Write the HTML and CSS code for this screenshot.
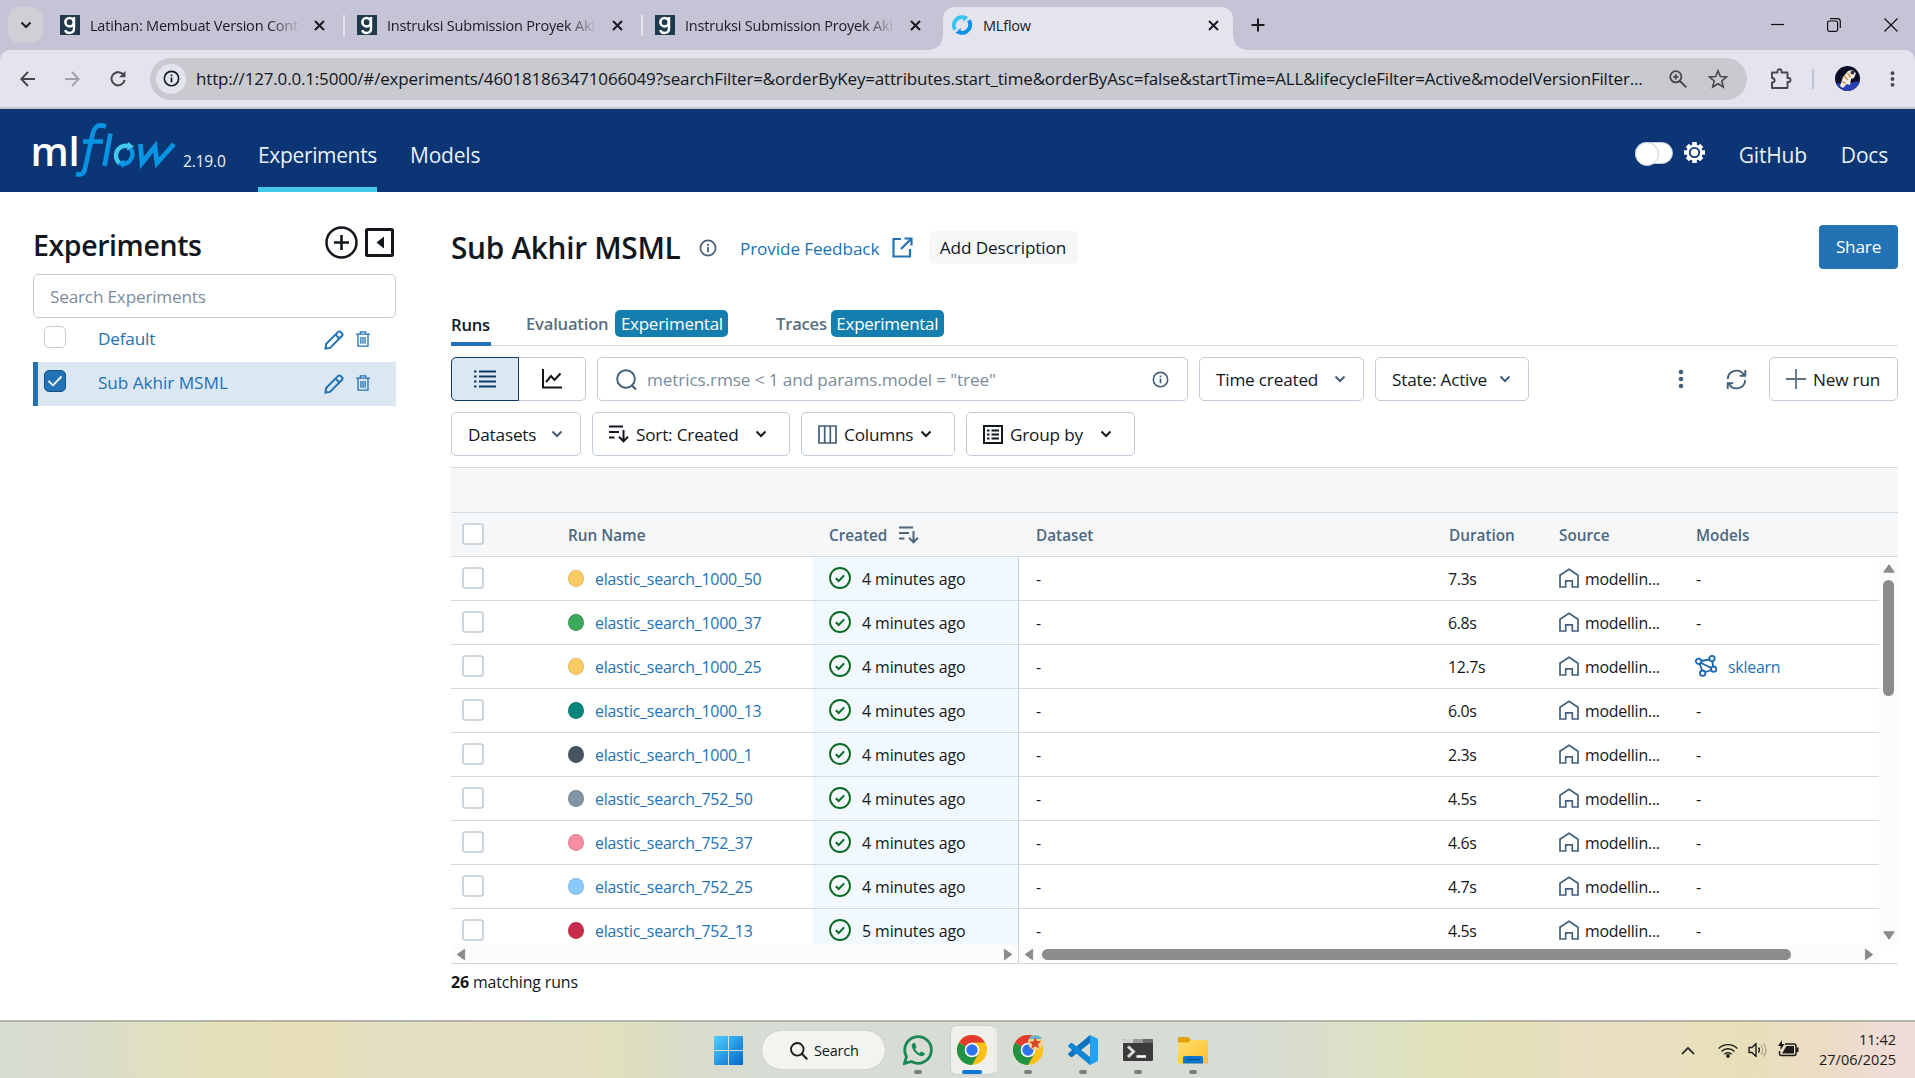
FILE: index.html
```html
<!DOCTYPE html>
<html lang="en">
<head>
<meta charset="utf-8">
<title>MLflow</title>
<link rel="stylesheet" href="styles.css">
</head>
<body>
<svg class="sprite" aria-hidden="true">
  <defs>
    <linearGradient id="win" x1="0" y1="0" x2="1" y2="1"><stop offset="0" stop-color="#4fd0ff"/><stop offset="1" stop-color="#0067c8"/></linearGradient>
    <linearGradient id="fold" x1="0" y1="0" x2="1" y2="1"><stop offset="0" stop-color="#ffdf70"/><stop offset="1" stop-color="#fcc02a"/></linearGradient>
  </defs>
  <symbol id="i-glints" viewBox="0 0 20 20"><rect width="20" height="20" fill="#1f3a4d"/><circle cx="9.6" cy="7.2" r="4.2" fill="none" stroke="#fff" stroke-width="2.6"/><path d="M14 2v11.5c0 5.6-7.6 5.6-8.8 1.6" fill="none" stroke="#fff" stroke-width="2.4"/></symbol>
  <symbol id="i-x" viewBox="0 0 11 11"><path d="M1 1l9 9M10 1l-9 9" fill="none" stroke="#1a1a1f" stroke-width="2"/></symbol>
  <symbol id="i-ring" viewBox="0 0 20 20"><path d="M3.200 14.600A8 8 0 0 1 12 2.500" fill="none" stroke="#38c6f0" stroke-width="3.800"/><path d="M16.800 5.400A8 8 0 0 1 8 17.500" fill="none" stroke="#0a90e6" stroke-width="3.800"/><path d="M10.500 0l6 2-5 5z" fill="#38c6f0"/><path d="M9.500 20l-6-2 5-5z" fill="#0a90e6"/></symbol>
  <symbol id="i-down" viewBox="0 0 12 8"><path d="M1.500 1.500L6 6l4.500-4.500" fill="none" stroke="currentColor" stroke-width="2"/></symbol>
  <symbol id="i-box" viewBox="0 0 22 22"><rect x="1" y="1" width="20" height="20" rx="2.500" fill="#fff" stroke="#c0cdd8" stroke-width="1.700"/></symbol>
  <symbol id="i-ok" viewBox="0 0 22 22"><circle cx="11" cy="11" r="10" fill="none" stroke="#0b6b20" stroke-width="1.900"/><path d="M6.800 11.300l2.900 2.700 5.400-5.600" fill="none" stroke="#0b6b20" stroke-width="2"/></symbol>
  <symbol id="i-home" viewBox="0 0 20 20"><path d="M1 7.200L10 1.200l9 6V19h-5.700v-6.200H6.700V19H1z" fill="none" stroke="#445f78" stroke-width="1.700"/></symbol>
  <symbol id="i-info" viewBox="0 0 18 18"><circle cx="9" cy="9" r="7.600" fill="none" stroke="currentColor" stroke-width="1.700"/><path d="M9 8v5M9 4.800v1.900" stroke="currentColor" stroke-width="1.800"/></symbol>
  <symbol id="i-pencil" viewBox="0 0 20 20"><path d="M1.500 18.500l.600-4.500L14.200 1.900a1.600 1.600 0 0 1 2.300 0l1.600 1.600a1.600 1.600 0 0 1 0 2.300L6 17.900zM11.500 4.600l3.900 3.900" fill="none" stroke="#2272b4" stroke-width="2"/></symbol>
  <symbol id="i-trash" viewBox="0 0 14 16"><path d="M0 3.200h14M2 3.500v11.700h10V3.500M4.300 3V.8h5.400V3M4.900 6v6.700M7 6v6.700M9.100 6v6.700" fill="none" stroke="#2272b4" stroke-width="1.300"/></symbol>
  <symbol id="i-sort" viewBox="0 0 20 18"><path d="M0 1.500h14M0 7h10M0 12.500h5.500M14.500 5v11M10 11.800l4.500 4.500 4.500-4.500" fill="none" stroke="currentColor" stroke-width="2"/></symbol>
  <symbol id="i-dots" viewBox="0 0 6 20"><circle cx="3" cy="3" r="2.300" fill="currentColor"/><circle cx="3" cy="10" r="2.300" fill="currentColor"/><circle cx="3" cy="17" r="2.300" fill="currentColor"/></symbol>
  <symbol id="i-chrome" viewBox="0 0 30 30"><circle cx="15" cy="15" r="15" fill="#fbc116"/><path d="M15 15L2 7.500A15 15 0 0 0 15 30l6.500-11.200z" fill="#229342"/><path d="M15 15L2 7.500a15 15 0 0 1 26 0z" fill="#e33b2e"/><path d="M15 7.500h13L15 15z" fill="#e33b2e"/><path d="M15 7.500h13a15 15 0 0 1 2 7.500L21 18z" fill="#fbc116"/><circle cx="15" cy="15" r="7.300" fill="#fff"/><circle cx="15" cy="15" r="5.700" fill="#2f74ec"/></symbol>
  <symbol id="i-tri" viewBox="0 0 12 9"><path d="M6 .8L11.300 8.200H.7z" fill="#8b8b8b" stroke="#8b8b8b" stroke-linejoin="round"/></symbol>
</svg>

<div class="tabstrip">
  <div class="tab-search"><svg width="12" height="8"><use href="#i-down"/></svg></div>
  <div class="tab first"><svg width="20" height="20"><use href="#i-glints"/></svg><span class="tab-title fade">Latihan: Membuat Version Cont</span><svg width="11" height="11"><use href="#i-x"/></svg></div>
  <div class="tab-sep"></div>
  <div class="tab"><svg width="20" height="20"><use href="#i-glints"/></svg><span class="tab-title fade">Instruksi Submission Proyek Akl</span><svg width="11" height="11"><use href="#i-x"/></svg></div>
  <div class="tab-sep"></div>
  <div class="tab"><svg width="20" height="20"><use href="#i-glints"/></svg><span class="tab-title fade">Instruksi Submission Proyek Akl</span><svg width="11" height="11"><use href="#i-x"/></svg></div>
  <div class="tab active"><svg width="20" height="20"><use href="#i-ring"/></svg><span class="tab-title">MLflow</span><svg width="11" height="11"><use href="#i-x"/></svg></div>
  <svg class="new-tab" width="14" height="14" viewBox="0 0 14 14"><path d="M7 .5v13M.5 7h13" stroke="#1a1a1f" stroke-width="2"/></svg>
  <div class="window-buttons">
    <svg width="13" height="14" viewBox="0 0 13 14"><path d="M0 6.500h13" stroke="#111" stroke-width="1.200"/></svg>
    <svg width="14" height="14" viewBox="0 0 14 14"><rect x=".6" y="3" width="10" height="10.300" rx="1.500" fill="none" stroke="#111" stroke-width="1.200"/><path d="M3 .7h7.500a2.800 2.800 0 0 1 2.800 2.800V10" fill="none" stroke="#111" stroke-width="1.200"/></svg>
    <svg width="14" height="14" viewBox="0 0 14 14"><path d="M.5 .5l13 13M13.500 .5l-13 13" stroke="#111" stroke-width="1.200"/></svg>
  </div>
</div>

<div class="toolbar-back">
<div class="toolbar">
  <svg class="nav-icon" width="15" height="16" viewBox="0 0 15 16"><path d="M15 8H1.500M8 1L1.300 8 8 15" fill="none" stroke="#46474c" stroke-width="1.900"/></svg>
  <svg class="nav-icon" width="15" height="16" viewBox="0 0 15 16"><path d="M0 8h13.500M7 1l6.700 7L7 15" fill="none" stroke="#a2a2a9" stroke-width="1.900"/></svg>
  <svg class="nav-icon" width="16" height="17" viewBox="0 0 16 17"><path d="M13.700 5.200A6.600 6.600 0 1 0 14.600 10" fill="none" stroke="#46474c" stroke-width="2"/><path d="M15.500 .8v6.400H9.200z" fill="#46474c"/></svg>
  <div class="address">
    <div class="site-info"><svg width="17" height="17"><use href="#i-info"/></svg></div>
    <span class="url">http://127.0.0.1:5000/#/experiments/460181863471066049?searchFilter=&amp;orderByKey=attributes.start_time&amp;orderByAsc=false&amp;startTime=ALL&amp;lifecycleFilter=Active&amp;modelVersionFilter...</span>
    <svg width="18" height="18" viewBox="0 0 18 18"><circle cx="6.800" cy="6.800" r="5.600" fill="none" stroke="#46474c" stroke-width="1.800"/><path d="M11 11l6.300 6.300M4.200 6.800h5.200M6.800 4.200v5.200" stroke="#46474c" stroke-width="1.800"/></svg>
    <svg class="star" width="20" height="20" viewBox="0 0 20 20"><path d="M10 1.800l2.400 5.700 6.100.5-4.700 4 1.500 6L10 14.800 4.700 18l1.500-6-4.700-4 6.100-.5z" fill="none" stroke="#46474c" stroke-width="1.600"/></svg>
  </div>
  <svg class="puzzle" width="22" height="22" viewBox="0 0 22 22"><path d="M2 4.500h5.500V3.200a2 2 0 0 1 4 0v1.300H17.500V10h1a1.800 1.800 0 0 1 0 4h-1v6H2v-5.500c3.500-.300 3.500-4.200 0-4.500z" fill="none" stroke="#46474c" stroke-width="1.900" stroke-linejoin="round"/></svg>
  <div class="bar-sep"></div>
  <svg class="avatar" width="25" height="25" viewBox="0 0 25 25"><clipPath id="av"><circle cx="12.500" cy="12.500" r="12.500"/></clipPath><g clip-path="url(#av)"><rect width="25" height="25" fill="#0b0d24"/><path d="M0 17q12 1 25-2v10H0z" fill="#2a3fb4"/><path d="M5 20l3-9 5-6 4-1 4 3-2 5-3 1-1 6-3-1-4 4z" fill="#f1ece4"/><path d="M9 10l4 4M12.500 7l3 4M7 16l4 1" stroke="#d9924e" stroke-width="1.500"/><circle cx="17.500" cy="6.500" r="2" fill="#393548"/></g></svg>
  <svg class="menu" width="5" height="18"><use href="#i-dots"/></svg>
</div>
</div>

<header class="app-header">
  <svg class="logo" width="146" height="60" viewBox="0 0 146 60">
    <text x="-2.500" y="46" class="logo-ml" textLength="49" lengthAdjust="spacingAndGlyphs">ml</text>
    <path d="M73 6.500c-8-3-11.500 0-13.500 8l-7.500 34c-1 5-3 7-9 5.500M50 21.500h20" fill="none" stroke="#0794e3" stroke-width="4.600"/>
    <path d="M77.500 13.500L71.500 46" stroke="#0794e3" stroke-width="4.600"/>
    <path d="M87 43.500a9.800 9.800 0 0 1 8-17.500" fill="none" stroke="#43c9ed" stroke-width="4.500"/>
    <path d="M97.500 28.500a9.800 9.800 0 0 1-8.500 15.500" fill="none" stroke="#0794e3" stroke-width="4.500"/>
    <path d="M95 22l6 4.500-7 4z" fill="#43c9ed"/><path d="M90.500 48l-6-4.500 7-4z" fill="#0794e3"/>
    <path d="M107.500 24l1.500 19 13-16.500 2 16.500L141 24" fill="none" stroke="#0794e3" stroke-width="4.800"/>
  </svg>
  <span class="version">2.19.0</span>
  <nav class="main-nav"><a class="current">Experiments</a><a>Models</a></nav>
  <div class="header-right">
    <div class="toggle"></div>
    <svg class="gear" width="23" height="23" viewBox="0 0 23 23"><circle cx="11.500" cy="11.500" r="8" fill="#fff"/><path d="M11.500 1v21M1 11.500h21M4.300 4.300l14.400 14.400M18.700 4.300L4.300 18.700" stroke="#fff" stroke-width="4.600"/><circle cx="11.500" cy="11.500" r="4.700" fill="#fff" stroke="#0b3574" stroke-width="1.800"/></svg>
    <a>GitHub</a><a>Docs</a>
  </div>
</header>

<div class="page">
  <aside class="sidebar">
    <div class="side-head">
      <h2>Experiments</h2>
      <svg width="33" height="33" viewBox="0 0 33 33"><circle cx="16.500" cy="16.500" r="15" fill="none" stroke="#11171c" stroke-width="2.500"/><path d="M16.500 9v15M9 16.500h15" stroke="#11171c" stroke-width="2.600"/></svg>
      <svg class="collapse" width="29" height="29" viewBox="0 0 29 29"><rect x="1.500" y="1.500" width="26" height="26" rx="1" fill="none" stroke="#11171c" stroke-width="3"/><path d="M19 8.500v12l-7.500-6z" fill="#11171c"/></svg>
    </div>
    <div class="side-search">Search Experiments</div>
    <div class="exp"><i class="check"></i><span>Default</span><svg width="20" height="20"><use href="#i-pencil"/></svg><svg class="trash" width="14" height="16"><use href="#i-trash"/></svg></div>
    <div class="exp selected"><i class="check on"><svg width="16" height="12" viewBox="0 0 16 12"><path d="M1.500 6l4.500 4.300L14.500 1.500" fill="none" stroke="#fff" stroke-width="1.800"/></svg></i><span>Sub Akhir MSML</span><svg width="20" height="20"><use href="#i-pencil"/></svg><svg class="trash" width="14" height="16"><use href="#i-trash"/></svg></div>
  </aside>

  <main class="content">
    <div class="title-row">
      <h1>Sub Akhir MSML</h1>
      <svg class="slate title-info" width="18" height="18"><use href="#i-info"/></svg>
      <a class="feedback">Provide Feedback</a>
      <svg width="21" height="21" viewBox="0 0 21 21"><path d="M9 2H1.500v17.500H18V12M12.500 1.500h7v7M19.500 1.500L9 12" fill="none" stroke="#2272b4" stroke-width="2.200"/></svg>
      <button class="desc">Add Description</button>
      <button class="share">Share</button>
    </div>
    <div class="tabs">
      <div class="view-tab on">Runs</div>
      <div class="view-tab eval">Evaluation<span class="badge">Experimental</span></div>
      <div class="view-tab traces">Traces<span class="badge">Experimental</span></div>
    </div>
    <div class="controls">
      <div class="segment"><div class="seg on"><svg width="22" height="18" viewBox="0 0 22 18"><path d="M0 1.500h2.500M5 1.500h17M0 6.500h2.500M5 6.500h17M0 11.500h2.500M5 11.500h17M0 16.500h2.500M5 16.500h17" stroke="#0e3a66" stroke-width="2"/></svg></div><div class="seg"><svg width="20" height="20" viewBox="0 0 20 20"><path d="M1 0v18.500h19M4 13l5-6 3.500 4L18.500 4.500" fill="none" stroke="#11171c" stroke-width="2"/></svg></div></div>
      <div class="filter"><svg width="21" height="21" viewBox="0 0 21 21"><circle cx="10" cy="10" r="8.800" fill="none" stroke="#445f78" stroke-width="1.900"/><path d="M15.500 16l4.500 4.500" stroke="#445f78" stroke-width="2.200"/></svg><span>metrics.rmse &lt; 1 and params.model = "tree"</span><svg class="slate" width="17" height="17"><use href="#i-info"/></svg></div>
      <button class="btn time">Time created<svg class="slate" width="12" height="8"><use href="#i-down"/></svg></button>
      <button class="btn state">State: Active<svg class="slate" width="12" height="8"><use href="#i-down"/></svg></button>
      <svg class="slate more" width="6" height="20"><use href="#i-dots"/></svg>
      <svg class="refresh" width="21" height="21" viewBox="0 0 21 21"><path d="M1.800 10A8.700 8.700 0 0 1 18 6M19.200 11A8.700 8.700 0 0 1 3 15M19.300 1v5.700h-5.500M1.700 20v-5.700h5.500" fill="none" stroke="#445f78" stroke-width="1.900"/></svg>
      <button class="btn new-run"><svg width="20" height="20" viewBox="0 0 20 20"><path d="M10 0v20M0 10h20" stroke="#5f7281" stroke-width="1.800"/></svg>New run</button>
    </div>
    <div class="controls second">
      <button class="btn datasets">Datasets<svg class="slate" width="12" height="8"><use href="#i-down"/></svg></button>
      <button class="btn sort"><svg width="20" height="18"><use href="#i-sort"/></svg>Sort: Created<svg width="12" height="8"><use href="#i-down"/></svg></button>
      <button class="btn columns"><svg width="19" height="19" viewBox="0 0 19 19"><path d="M1 1h17v17H1zM6.700 1v17M12.300 1v17" fill="none" stroke="#445f78" stroke-width="1.700"/></svg>Columns<svg width="12" height="8"><use href="#i-down"/></svg></button>
      <button class="btn group"><svg width="20" height="19" viewBox="0 0 20 19"><rect x="1" y="1" width="18" height="17" fill="none" stroke="#11171c" stroke-width="2"/><path d="M4 5.500h2.500M8.500 5.500h7.500M4 9.500h2.500M8.500 9.500h7.500M4 13.500h2.500M8.500 13.500h7.500" stroke="#11171c" stroke-width="1.800"/></svg>Group by<svg width="12" height="8"><use href="#i-down"/></svg></button>
    </div>

    <section class="grid">
      <div class="group-head"></div>
      <div class="head-row"><svg width="22" height="22"><use href="#i-box"/></svg><span>Run Name</span><span class="h-created">Created<svg width="20" height="18"><use href="#i-sort"/></svg></span><span>Dataset</span><span>Duration</span><span>Source</span><span>Models</span></div>
      <div class="grid-body">
        <div class="pinned">
          <div class="pin-rows">
            <div class="pr"><svg width="22" height="22"><use href="#i-box"/></svg><a><i class="dot c1"></i>elastic_search_1000_50</a><span><svg width="22" height="22"><use href="#i-ok"/></svg>4 minutes ago</span></div>
            <div class="pr"><svg width="22" height="22"><use href="#i-box"/></svg><a><i class="dot c2"></i>elastic_search_1000_37</a><span><svg width="22" height="22"><use href="#i-ok"/></svg>4 minutes ago</span></div>
            <div class="pr"><svg width="22" height="22"><use href="#i-box"/></svg><a><i class="dot c1"></i>elastic_search_1000_25</a><span><svg width="22" height="22"><use href="#i-ok"/></svg>4 minutes ago</span></div>
            <div class="pr"><svg width="22" height="22"><use href="#i-box"/></svg><a><i class="dot c3"></i>elastic_search_1000_13</a><span><svg width="22" height="22"><use href="#i-ok"/></svg>4 minutes ago</span></div>
            <div class="pr"><svg width="22" height="22"><use href="#i-box"/></svg><a><i class="dot c4"></i>elastic_search_1000_1</a><span><svg width="22" height="22"><use href="#i-ok"/></svg>4 minutes ago</span></div>
            <div class="pr"><svg width="22" height="22"><use href="#i-box"/></svg><a><i class="dot c5"></i>elastic_search_752_50</a><span><svg width="22" height="22"><use href="#i-ok"/></svg>4 minutes ago</span></div>
            <div class="pr"><svg width="22" height="22"><use href="#i-box"/></svg><a><i class="dot c6"></i>elastic_search_752_37</a><span><svg width="22" height="22"><use href="#i-ok"/></svg>4 minutes ago</span></div>
            <div class="pr"><svg width="22" height="22"><use href="#i-box"/></svg><a><i class="dot c7"></i>elastic_search_752_25</a><span><svg width="22" height="22"><use href="#i-ok"/></svg>4 minutes ago</span></div>
            <div class="pr"><svg width="22" height="22"><use href="#i-box"/></svg><a><i class="dot c8"></i>elastic_search_752_13</a><span><svg width="22" height="22"><use href="#i-ok"/></svg>5 minutes ago</span></div>
          </div>
          <div class="hbar"><svg class="left" width="12" height="9"><use href="#i-tri"/></svg><svg class="right" width="12" height="9"><use href="#i-tri"/></svg></div>
        </div>
        <div class="scrolling">
          <div class="sc-rows">
            <div class="sr"><span>-</span><span>7.3s</span><span><svg width="20" height="20"><use href="#i-home"/></svg>modellin...</span><span>-</span></div>
            <div class="sr"><span>-</span><span>6.8s</span><span><svg width="20" height="20"><use href="#i-home"/></svg>modellin...</span><span>-</span></div>
            <div class="sr"><span>-</span><span>12.7s</span><span><svg width="20" height="20"><use href="#i-home"/></svg>modellin...</span><a><svg width="22" height="22" viewBox="0 0 22 22"><path d="M3.500 6.500L17 4M4 7l4 11M4 7l14.500 7M17 4l1.500 10M18 14.500L8 18" fill="none" stroke="#1b66ae" stroke-width="1.800"/><g fill="#fff" stroke="#1b66ae" stroke-width="1.800"><circle cx="3.600" cy="6.300" r="2.700"/><circle cx="17" cy="3.600" r="2.700"/><circle cx="18.700" cy="14.200" r="2.700"/><circle cx="7.700" cy="18.200" r="2.700"/></g></svg>sklearn</a></div>
            <div class="sr"><span>-</span><span>6.0s</span><span><svg width="20" height="20"><use href="#i-home"/></svg>modellin...</span><span>-</span></div>
            <div class="sr"><span>-</span><span>2.3s</span><span><svg width="20" height="20"><use href="#i-home"/></svg>modellin...</span><span>-</span></div>
            <div class="sr"><span>-</span><span>4.5s</span><span><svg width="20" height="20"><use href="#i-home"/></svg>modellin...</span><span>-</span></div>
            <div class="sr"><span>-</span><span>4.6s</span><span><svg width="20" height="20"><use href="#i-home"/></svg>modellin...</span><span>-</span></div>
            <div class="sr"><span>-</span><span>4.7s</span><span><svg width="20" height="20"><use href="#i-home"/></svg>modellin...</span><span>-</span></div>
            <div class="sr"><span>-</span><span>4.5s</span><span><svg width="20" height="20"><use href="#i-home"/></svg>modellin...</span><span>-</span></div>
          </div>
          <div class="hbar"><svg class="left" width="12" height="9"><use href="#i-tri"/></svg><i class="hthumb"></i><svg class="right" width="12" height="9"><use href="#i-tri"/></svg></div>
        </div>
        <div class="vbar"><svg width="12" height="9"><use href="#i-tri"/></svg><i class="vthumb"></i><svg class="down" width="12" height="9"><use href="#i-tri"/></svg></div>
      </div>
    </section>
    <p class="count"><b>26</b> matching runs</p>
  </main>
</div>

<footer class="taskbar">
  <div class="apps">
    <svg class="start" width="29" height="29" viewBox="0 0 29 29"><path d="M1 0h13v14H0V1a1 1 0 0 1 1-1zM15 0h13a1 1 0 0 1 1 1v13H15zM0 15h14v14H1a1 1 0 0 1-1-1zM15 15h14v13a1 1 0 0 1-1 1H15z" fill="url(#win)"/></svg>
    <div class="search-pill"><svg width="18" height="18" viewBox="0 0 18 18"><circle cx="7.300" cy="7.300" r="6.300" fill="none" stroke="#1b1b1b" stroke-width="1.800"/><path d="M11.800 11.800l5.500 5.500" stroke="#1b1b1b" stroke-width="2"/></svg>Search</div>
    <div class="app"><svg width="30" height="30" viewBox="0 0 30 30"><path d="M1.500 28.500l2-7a13.300 13.300 0 1 1 5 5z" fill="none" stroke="#1b8755" stroke-width="2.800"/><path d="M10.500 8c-2 1-2.300 3-1 5.500 2 4 4.500 6.300 8 7.500 2 .600 4-.500 4.500-2.500l-3.700-2-1.800 1.700c-2-.800-3.500-2.300-4.300-4.200l1.300-1.700L12 8z" fill="#1b8755"/></svg><i class="pip"></i></div>
    <div class="app active-app"><svg width="30" height="30"><use href="#i-chrome"/></svg><i class="pip wide"></i></div>
    <div class="app"><svg width="30" height="30" viewBox="0 0 30 30"><use href="#i-chrome"/><circle cx="22.500" cy="7.500" r="7.500" fill="#f0d28a"/><path d="M16 4a7.500 7.500 0 0 1 13 0z" fill="#57b8d6"/><path d="M22 2l1.800 4 4.200.300-3.200 3L26 13.500l-3.900-2.200-3.600 2.500.9-4.400-3-2.700 4.200-.500z" fill="#d8432a"/></svg><i class="pip"></i></div>
    <div class="app"><svg width="30" height="30" viewBox="0 0 30 30"><path d="M22 0v8L4.500 21.800a1.500 1.500 0 0 1-2 0L.6 20a1.300 1.300 0 0 1 0-2z" fill="#0f74c0"/><path d="M22 30v-8L4.500 8.200a1.500 1.500 0 0 0-2 0L.6 10a1.300 1.300 0 0 0 0 2z" fill="#1186d4"/><path d="M22 0l6.800 3.200A2 2 0 0 1 30 5v20a2 2 0 0 1-1.200 1.800L22 30z" fill="#25a3f2"/></svg><i class="pip"></i></div>
    <div class="app"><svg width="30" height="30" viewBox="0 0 30 30"><rect y="4" width="30" height="22" rx="1.500" fill="#3b3b3b"/><path d="M0 8V5.500A1.500 1.500 0 0 1 1.500 4H10v4z" fill="#cfcfcf"/><path d="M10 4h10v4H10z" fill="#999"/><path d="M20 4h8.500A1.500 1.500 0 0 1 30 5.500V8H20z" fill="#6a6a6a"/><path d="M5 11.500l5.500 5L5 22" fill="none" stroke="#d8d8d8" stroke-width="3"/><path d="M13.500 21.500h9.500" stroke="#fff" stroke-width="2.600"/></svg><i class="pip"></i></div>
    <div class="app"><svg width="30" height="30" viewBox="0 0 30 30"><path d="M0 3.500A1.500 1.500 0 0 1 1.500 2H10L13 5v5H0z" fill="#e3a008"/><path d="M0 7.500h10l3-2.500h15.500A1.500 1.500 0 0 1 30 6.500V28.500H0z" fill="url(#fold)"/><path d="M5 28.500V23a2 2 0 0 1 2-2h16a2 2 0 0 1 2 2v5.500z" fill="#0b78cf"/><path d="M8.500 24.500h13" stroke="#064f93" stroke-width="1.400"/></svg><i class="pip"></i></div>
  </div>
  <div class="tray">
    <svg width="14" height="9" viewBox="0 0 14 9"><path d="M1 8l6-6 6 6" fill="none" stroke="#1b1b1b" stroke-width="1.700"/></svg>
    <svg class="wifi" width="20" height="15" viewBox="0 0 20 15"><path d="M.7 5.500a13 13 0 0 1 18.600 0M3.500 8.500a9.200 9.200 0 0 1 13 0M6.300 11.300a5.200 5.200 0 0 1 7.400 0" fill="none" stroke="#1b1b1b" stroke-width="1.400"/><circle cx="10" cy="13" r="1.900" fill="#1b1b1b"/></svg>
    <svg class="vol" width="20" height="16" viewBox="0 0 20 16"><path d="M1 5.500h3L8 1.500v13l-4-4H1z" fill="none" stroke="#1b1b1b" stroke-width="1.400" stroke-linejoin="round"/><path d="M10.500 5.500a4 4 0 0 1 0 5" fill="none" stroke="#1b1b1b" stroke-width="1.300"/><path d="M13 3.500a7 7 0 0 1 0 9M15.500 1.500a10 10 0 0 1 0 13" fill="none" stroke="#a9a58b" stroke-width="1.200"/></svg>
    <svg class="bat" width="21" height="17" viewBox="0 0 21 17"><path d="M7 4h9a2 2 0 0 1 2 2v7.500a2 2 0 0 1-2 2H3.500a2 2 0 0 1-2-2V11" fill="none" stroke="#1b1b1b" stroke-width="1.500"/><path d="M8.500 6h7.500v7.500H4z" fill="#1b1b1b"/><path d="M18.500 7.500h2v4.500h-2z" fill="#1b1b1b"/><path d="M4 0v4h2.500L2.500 10V6H0z" fill="#1b1b1b"/></svg>
    <div class="clock"><span>11:42</span><span>27/06/2025</span></div>
  </div>
</footer>
</body>
</html>
```
FILE: styles.css
```css
* { box-sizing: border-box; }
body {
  margin: 0; width: 1915px; height: 1078px; overflow: hidden;
  display: flex; flex-direction: column;
  background: #fff; color: #11171c;
  font: 17.2px/24px "Open Sans", "Noto Sans", sans-serif; letter-spacing: -.2px;
}
svg { display: block; flex: none; }
.sprite { width: 0; height: 0; position: absolute; }
h1, h2, p { margin: 0; }
button { font: inherit; letter-spacing: inherit; color: inherit; margin: 0; border: 0; padding: 0; background: none; }
i { font-style: normal; }
.slate { color: #445f78; }

/* browser chrome */
.tabstrip { height: 50px; flex: none; display: flex; align-items: center; background: #c4c4d6; font-size: 14.500px; color: #1b1b20; letter-spacing: -.2px; }
.tab-search { width: 35px; height: 36px; margin-left: 8px; border-radius: 12px; background: #cfcfd6; display: flex; align-items: center; justify-content: center; }
.tab { display: flex; align-items: center; width: 296px; padding-left: 12px; }
.tab.first { width: 300px; padding-left: 17px; }
.tab-title { width: 213px; margin: 0 12px 0 10px; white-space: nowrap; overflow: hidden; line-height: 36px; padding-top: 1px; }
.fade { -webkit-mask-image: linear-gradient(90deg, #000 84%, transparent 99%); mask-image: linear-gradient(90deg, #000 84%, transparent 99%); }
.tab.first .tab-title { margin-right: 11px; }
.tab-sep { width: 2px; height: 21px; background: #e4e4ee; }
.tab.active { position: relative; width: 290px; height: 43px; align-self: flex-end; margin-left: 4px; padding: 0 0 7px 9px; background: #e4e4ee; border-radius: 12px 12px 0 0; }
.tab.active .tab-title { width: 210px; margin: 0 15px 0 11px; }
.tab.active::before, .tab.active::after { content: ""; position: absolute; bottom: 0; width: 14px; height: 14px; }
.tab.active::before { left: -14px; background: radial-gradient(circle at 0 0, transparent 13.500px, #e4e4ee 14px); }
.tab.active::after { right: -14px; background: radial-gradient(circle at 100% 0, transparent 13.500px, #e4e4ee 14px); }
.new-tab { margin-left: 18px; }
.window-buttons { margin-left: auto; margin-right: 17px; display: flex; gap: 43px; }
.toolbar-back { background: #c4c4d6; height: 59px; flex: none; }
.toolbar { height: 59px; display: flex; align-items: center; background: #e4e4ee; border-radius: 10px 10px 0 0; border-bottom: 2px solid #c6c8ca; padding-left: 20px; }
.nav-icon { margin-right: 30px; }
.nav-icon + .nav-icon + .nav-icon { margin-right: 24px; }
.address { width: 1597px; height: 42px; border-radius: 21px; background: #c9c9d0; display: flex; align-items: center; padding-left: 6px; }
.site-info { width: 30px; height: 30px; border-radius: 50%; background: #e4e4ee; display: flex; align-items: center; justify-content: center; }
.url { width: 1473px; margin-left: 10px; font-size: 17px; letter-spacing: -.175px; white-space: nowrap; padding-top: 1px; }
.star { margin-left: 21px; }
.puzzle { margin-left: 23px; }
.bar-sep { width: 2px; height: 20px; background: #c4c4d8; margin-left: 20px; }
.avatar { margin-left: 21px; }
.menu { color: #46474c; margin-left: 30px; }

/* MLflow header */
.app-header { height: 83px; flex: none; background: #0b3574; color: #e8f1f8; display: flex; padding-left: 33px; }
.logo { margin-top: 11px; }
.logo-ml { font: 600 39px "Open Sans", sans-serif; fill: #fff; }
.version { font-size: 15.600px; margin: 40px 0 0 4px; width: 75px; }
.main-nav { display: flex; gap: 34px; }
.main-nav a, .header-right a { font-size: 21px; letter-spacing: -.2px; line-height: 28px; padding-top: 32px; }
.main-nav .current { border-bottom: 5px solid #43c9ed; width: 119px; letter-spacing: -.35px; margin-right: -1px; }
.header-right { display: flex; margin-left: auto; padding-right: 27px; }
.toggle { width: 38px; height: 22px; margin-top: 33px; border-radius: 11px; background: #fff; border: 1px solid #c0cdd8; position: relative; }
.toggle::before { content: ""; position: absolute; left: -1px; top: -1px; width: 22px; height: 22px; border-radius: 50%; border: 1px solid #c0cdd8; background: #fff; }
.gear { margin: 32px 33px 0 10px; }
.header-right a + a { margin-left: 34px; }

/* experiment list */
.page { height: 828px; flex: none; display: flex; }
.sidebar { width: 451px; padding-left: 33px; }
.side-head { display: flex; align-items: center; height: 82px; padding-top: 24px; width: 363px; }
h2 { font-size: 28.500px; font-weight: 600; letter-spacing: -.4px; line-height: 40px; flex: 1; }
.side-head svg { margin-top: -1px; margin-bottom: 4px; }
.side-head .collapse { margin-left: 7px; margin-right: 2px; }
.side-search { width: 363px; height: 44px; border: 1px solid #c0cdd8; border-radius: 5px; padding-left: 16px; line-height: 43px; color: #7b8d9c; }
.exp { width: 363px; height: 44px; display: flex; align-items: center; color: #2272b4; padding: 0 26px 0 11px; }
.exp span { flex: 1; padding-left: 32px; padding-bottom: 3px; }
.exp .trash { margin-left: 12px; margin-bottom: 2px; }
.check { width: 22px; height: 22px; border: 1px solid #c0cdd8; border-radius: 5px; margin-top: -6px; display: flex; align-items: center; justify-content: center; }
.check.on { background: #2272b4; border-color: #0e538b; }
.selected { background: #dbe8f4; border-left: 5px solid #2272b4; padding-left: 6px; }
.selected span { letter-spacing: -.05px; }

/* run view */
.content { width: 1447px; }
.title-row { display: flex; align-items: center; height: 110px; }
h1 { font-size: 29.800px; font-weight: 600; letter-spacing: -.3px; width: 248px; white-space: nowrap; padding-top: 1px; }
.feedback { color: #2272b4; margin: 3px 12px 0 23px; width: 140px; white-space: nowrap; letter-spacing: -.12px; }
.title-row svg { margin-top: 1px; }
.desc { width: 149px; height: 33px; margin: 1px 0 0 16px; border-radius: 6px; background: #f6f7f9; padding: 1px 1px 0 0; letter-spacing: -.12px; }
.share { width: 79px; height: 44px; margin-left: auto; border-radius: 4px; background: #2272b4; color: #fff; }
.tabs { display: flex; height: 44px; border-bottom: 1px solid #d1d9e1; font-weight: 600; font-size: 16.600px; letter-spacing: -.2px; color: #5a6f80; }
.view-tab { display: flex; align-items: center; height: 44px; white-space: nowrap; }
.view-tab.on { color: #11171c; width: 40px; border-bottom: 4px solid #2272b4; margin-right: 35px; padding-top: 5px; }
.view-tab.eval { width: 250px; }
.badge { height: 27px; width: 113px; margin: 0 0 2px 7px; border-radius: 5px; background: #147eae; color: #fff; font-weight: 400; line-height: 28px; text-align: center; font-size: 17px; letter-spacing: -.25px; }
.traces .badge { margin-left: 4px; }
.controls { display: flex; align-items: center; margin-top: 11px; height: 44px; }
.controls.second { gap: 11px; }
.btn { display: flex; align-items: center; height: 44px; border: 1px solid #c0cdd8; border-radius: 5px; padding: 1px 17px 0 16px; white-space: nowrap; }
.btn svg { margin-bottom: 1px; }
.btn svg:last-child { margin-left: auto; }
.segment { display: flex; width: 135px; height: 44px; }
.seg { width: 67px; border: 1px solid #c0cdd8; border-left: 0; border-radius: 0 5px 5px 0; display: flex; align-items: center; justify-content: center; }
.seg.on { width: 68px; border: 1px solid #0e3a66; border-radius: 5px 0 0 5px; background: #dbe8f4; }
.filter { width: 591px; height: 44px; margin-left: 11px; border: 1px solid #c0cdd8; border-radius: 5px; display: flex; align-items: center; padding: 0 18px 0 18px; color: #7b8d9c; }
.filter span { flex: 1; margin-left: 10px; padding-top: 1px; letter-spacing: -.12px; }
.time { width: 165px; margin-left: 11px; }
.state { width: 154px; margin-left: 11px; }
.more { margin-left: 149px; }
.refresh { margin: 0 22px 0 42px; }
.new-run { width: 129px; gap: 7px; }
.new-run svg:first-child { margin: 0 0 1px; }
.datasets { width: 130px; }
.sort { width: 198px; gap: 7px; padding-right: 22px; }
.columns { width: 154px; gap: 7px; padding-right: 23px; }
.group { width: 169px; gap: 7px; padding-right: 22px; }

/* runs table */
.grid { margin-top: 11px; border-top: 1px solid #d1d9e1; border-bottom: 1px solid #d1d9e1; font-size: 15.900px; letter-spacing: -.22px; }
.group-head { height: 45px; background: #f6f7f9; border-bottom: 1px solid #d1d9e1; }
.head-row { height: 44px; background: #f6f7f9; border-bottom: 1px solid #d1d9e1; display: grid; grid-template-columns: 106px 245px 223px 413px 110px 137px 1fr; align-items: center; padding-left: 11px; font-weight: 600; font-size: 15.300px; letter-spacing: 0; color: #4d677d; }
.head-row > svg { margin-bottom: 1px; }
.h-created { display: flex; align-items: center; gap: 12px; padding-left: 16px; }
.grid-body { height: 406px; display: flex; }
.pinned { width: 568px; border-right: 1px solid #c9d5df; }
.pin-rows, .sc-rows { height: 388px; overflow: hidden; }
.pr, .sr { height: 44px; border-bottom: 1px solid #d1d9e1; display: grid; align-items: center; }
.pr { grid-template-columns: 106px 245px 1fr; padding-left: 11px; }
.pr > svg { margin-bottom: 1px; }
.pr span svg { margin-bottom: 1px; }
.pr a { color: #2272b4; display: flex; align-items: center; }
.dot { width: 16px; height: 17px; border-radius: 50%; margin-right: 11px; border: 1px solid rgba(0,0,0,.1); }
.pr span { height: 43px; background: #f1f8fe; display: flex; align-items: center; gap: 11px; padding-left: 16px; letter-spacing: -.1px; }
.c1 { background: #fbcb66; } .c2 { background: #3ba85c; } .c3 { background: #05857a; } .c4 { background: #445461; }
.c5 { background: #8396a5; } .c6 { background: #f78ea2; } .c7 { background: #8acaff; } .c8 { background: #c82d4c; }
.scrolling { width: 860px; }
.sr { grid-template-columns: 412px 111px 137px 1fr; padding-left: 17px; }
.sr span, .sr a { display: flex; align-items: center; gap: 6px; }
.sr span:nth-child(2) { letter-spacing: -.35px; }
.sr a { color: #2272b4; gap: 11px; margin-left: -1px; }
.sr svg { margin-bottom: 1px; }
.hbar { height: 18px; background: #fcfcfc; display: flex; align-items: center; }
.hbar .left { transform: rotate(-90deg); margin-left: 4px; }
.hbar .right { transform: rotate(90deg); margin-left: auto; margin-right: 4px; }
.hthumb { width: 749px; height: 11px; border-radius: 6px; background: #8b8b8b; margin-left: 7px; }
.vbar { width: 19px; height: 388px; background: #fcfcfc; display: flex; flex-direction: column; align-items: center; padding: 7px 0 5px; }
.vthumb { width: 11px; height: 116px; border-radius: 6px; background: #8b8b8b; margin-top: 7px; }
.down { transform: rotate(180deg); margin-top: auto; }
.count { margin-top: 6px; font-size: 15.900px; letter-spacing: -.13px; }

/* taskbar */
.taskbar { height: 58px; flex: none; border-top: 2px solid #b3b5a9; display: flex; background: linear-gradient(90deg, #d7dcd2 0, #d9dccc 80px, #e1e0bd 170px, #e7dfb7 305px, #e3dfc4 400px, #e4ddc4 490px, #e0dfbd 620px, #dadcca 680px, #d7dcd4 760px, #d7dcd4 1250px, #dbe0c8 1350px, #e0e2bb 1430px, #e4e0b9 1500px, #e8dfc2 1590px, #e8dfba 1750px, #ecdcc6 1830px, #f0dcd6 1890px); }
.apps { display: flex; align-items: center; margin-left: 714px; }
.start { margin-right: 19px; }
.search-pill { width: 123px; height: 38px; border-radius: 19px; background: #f3f4f0; box-shadow: 0 0 1px #aaa; display: flex; align-items: center; gap: 6px; padding: 1px 0 0 28px; font-size: 14.500px; margin-right: 8px; }
.app { width: 44px; height: 48px; margin: 3px 5.500px 4px; display: flex; flex-direction: column; align-items: center; padding-top: 9px; }
.search-pill + .app { margin-left: 3px; }
.active-app { background: #eff0ec; border-radius: 5px; box-shadow: 4px 0 0 -1px #e9ebe4, 0 0 2px #b5b8ae; width: 43px; margin-left: 5px; margin-right: 7px; }
.pip { width: 8px; height: 4px; border-radius: 2px; background: #7c7f7a; margin-top: 5px; }
.pip.wide { width: 20px; background: #0a78d4; }
.tray { margin-left: auto; display: flex; align-items: center; padding-right: 19px; color: #1b1b1b; }
.wifi { margin-left: 23px; }
.vol { margin-left: 10px; }
.bat { margin-left: 10px; margin-top: -3px; }
.clock { width: 97px; display: flex; flex-direction: column; text-align: right; font-size: 14.500px; line-height: 20px; letter-spacing: 0; }
```
